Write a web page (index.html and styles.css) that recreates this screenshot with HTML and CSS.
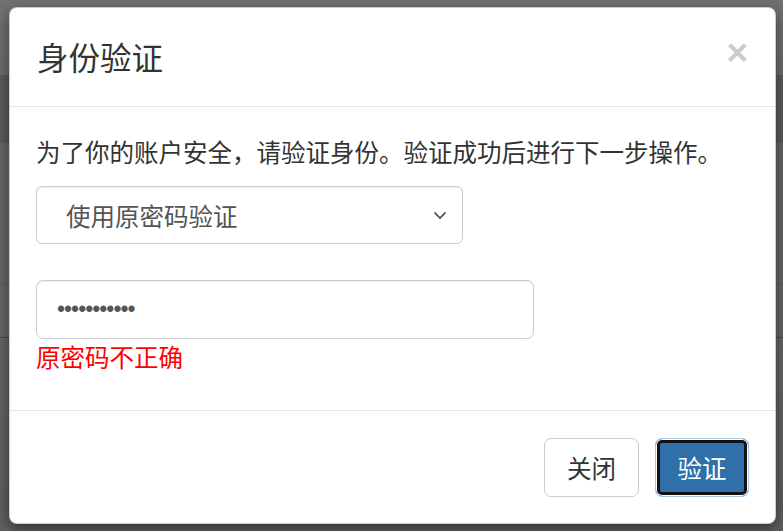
FILE: index.html
```html
<!DOCTYPE html>
<html lang="zh-CN">
<head>
<meta charset="utf-8">
<title>身份验证</title>
<link rel="stylesheet" href="styles.css">
</head>
<body>
<div class="backdrop">
  <div class="modal">
    <div class="modal-header">
      <h4 class="modal-title">身份验证</h4>
      <button class="close" type="button" aria-label="Close">×</button>
    </div>
    <div class="modal-body">
      <p class="intro">为了你的账户安全，请验证身份。验证成功后进行下一步操作。</p>
      <div class="select-wrap">
        <select class="form-select">
          <option>使用原密码验证</option>
        </select>
        <svg class="chevron" width="14" height="9" viewBox="0 0 14 9"><path d="M1.5 1.5 L7 7 L12.5 1.5" fill="none" stroke="#444" stroke-width="1.6"/></svg>
      </div>
      <input class="form-control" type="password" value="12345678901">
      <div class="error">原密码不正确</div>
    </div>
    <div class="modal-footer">
      <button class="btn btn-default" type="button">关闭</button>
      <button class="btn btn-primary" type="button">验证</button>
    </div>
  </div>
</div>
</body>
</html>
```

FILE: styles.css
```css
html, body {
  margin: 0;
  padding: 0;
}
body {
  width: 783px;
  height: 531px;
  overflow: hidden;
  font-family: "Noto Sans CJK SC", "Noto Sans", sans-serif;
  background: linear-gradient(to bottom,
    #727272 0, #6e6e6e 75px,
    #5d5d5d 75px, #5d5d5d 143px,
    #686868 143px, #686868 283px,
    #5e5e5e 283px, #5e5e5e 284px,
    #686868 284px, #686868 337px,
    #4c4c4c 337px, #4c4c4c 338px,
    #676767 338px, #606060 531px);
}
.backdrop {
  padding: 7px 0 0 9px;
}
.modal {
  box-sizing: border-box;
  width: 767px;
  background: #fff;
  border: 1px solid rgba(0,0,0,.2);
  border-radius: 8px;
  box-shadow: 0 5px 15px rgba(0,0,0,.5);
  color: #333;
}
.modal-header {
  display: flex;
  justify-content: space-between;
  align-items: flex-start;
  padding: 26px 26px 27px 27px;
  border-bottom: 1px solid #e5e5e5;
}
.modal-title {
  margin: 0;
  font-size: 31.5px;
  font-weight: 400;
  line-height: 45px;
  color: #333;
}
.close {
  margin: 0 1px 0 0;
  padding: 0;
  border: 0;
  background: none;
  font-family: "Liberation Sans", Arial, sans-serif;
  font-size: 37px;
  font-weight: 700;
  line-height: 37px;
  color: #000;
  opacity: .2;
  cursor: pointer;
}
.modal-body {
  padding: 27px 26px 36px 26px;
}
.intro {
  margin: 0 0 17px 0;
  font-size: 24.5px;
  line-height: 35px;
  color: #333;
  white-space: nowrap;
}
.select-wrap {
  position: relative;
  width: 427px;
}
.form-select {
  display: block;
  box-sizing: border-box;
  width: 427px;
  height: 58px;
  margin: 0;
  padding: 0 40px 0 29px;
  -webkit-appearance: none;
  appearance: none;
  border: 1px solid #ccc;
  border-radius: 6px;
  background: #fff;
  font-family: inherit;
  font-size: 24.5px;
  color: #555;
  box-shadow: inset 0 1px 1px rgba(0,0,0,.075);
}
.chevron {
  position: absolute;
  right: 16px;
  top: 25px;
  pointer-events: none;
}
.form-control {
  display: block;
  box-sizing: border-box;
  width: 498px;
  height: 59px;
  margin: 36px 0 0 0;
  padding: 0 20px;
  border: 1px solid #ccc;
  border-radius: 7px;
  background: #fff;
  font-family: "Liberation Sans", Arial, sans-serif;
  font-size: 23px;
  letter-spacing: -1px;
  color: #555;
  box-shadow: inset 0 1px 1px rgba(0,0,0,.075);
}
.error {
  font-size: 24.5px;
  line-height: 35px;
  color: #ff0000;
}
.modal-footer {
  display: flex;
  justify-content: flex-end;
  gap: 16px;
  padding: 27px 26px 26px 26px;
  border-top: 1px solid #e5e5e5;
}
.btn {
  box-sizing: border-box;
  height: 59px;
  padding: 0 21px;
  border: 1px solid #ccc;
  border-radius: 7px;
  font-family: "Noto Sans CJK SC", "Noto Sans", sans-serif;
  font-size: 24.5px;
  line-height: 35px;
  cursor: pointer;
}
.btn-default {
  width: 95px;
  background: #fff;
  color: #333;
}
.btn-primary {
  width: 94px;
  background: #2f70a9;
  border-color: #a9c5df;
  color: #fff;
  box-shadow: inset 0 0 0 1px #fff, inset 0 0 0 4px #111;
}
```
